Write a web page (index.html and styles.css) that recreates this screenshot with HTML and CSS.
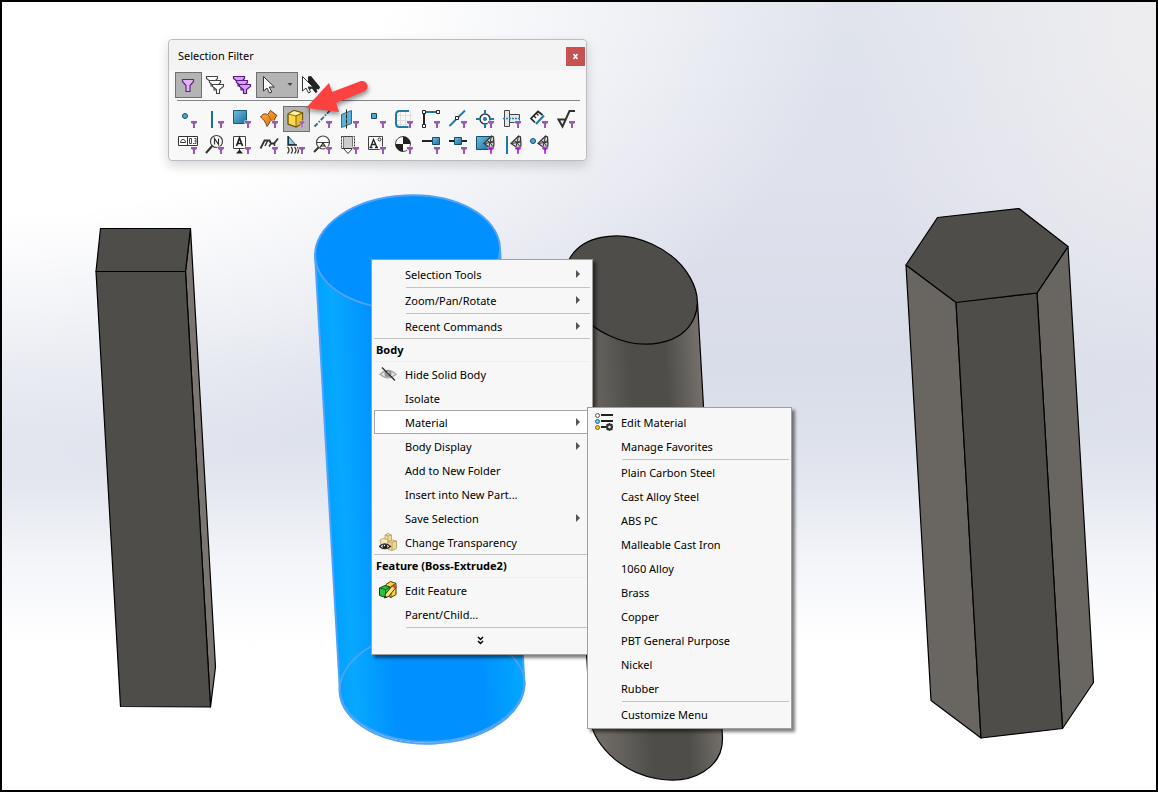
FILE: index.html
```html
<!DOCTYPE html>
<html lang="en">
<head>
    <meta charset="UTF-8">
    <meta name="viewport" content="width=device-width, initial-scale=1.0">
    <title>Part - Selection Filter</title>
    <link rel="stylesheet" href="styles.css">
</head>
<body>
    <!-- Shared icon parts -->
    <svg class="defs" aria-hidden="true">
        <defs>
            <linearGradient id="blueFill" x1="0" y1="0" x2="1" y2="1">
                <stop offset="0" stop-color="#6fc0e0"/>
                <stop offset="1" stop-color="#1b6f9c"/>
            </linearGradient>
            <linearGradient id="orangeFill" x1="0" y1="0" x2="1" y2="1">
                <stop offset="0" stop-color="#f9b052"/>
                <stop offset="1" stop-color="#d96a08"/>
            </linearGradient>
        </defs>
        <symbol id="funnel" viewBox="0 0 27 26">
            <path d="M15.500 14.500h7v3l-2 2v3.500h-3v-3.500l-2-2z" fill="#f8f8f8"/>
            <path d="M16 15h6v2l-2 1v4h-2v-4l-2-1z" fill="#9b59b6"/>
        </symbol>
        <symbol id="funnel-hot" viewBox="0 0 27 26">
            <path d="M16 15h6v2l-2 1v4h-2v-4l-2-1z" fill="#b010e0" stroke="#f8f8f8" stroke-width=".4"/>
        </symbol>
        <symbol id="mesh" viewBox="0 0 27 26">
            <path d="M12 11.500L19.500 4l2 1 .5 7-.5 3.500-4.500-.5z" fill="#d8d8d8" stroke="#333" stroke-width="1.200"/>
            <path d="M12 11.500l10-1.500M19.500 4L18 10.500l3.500 5M18 10.500l-1 4.500M15 8.500l3 2 4-2" fill="none" stroke="#333"/>
        </symbol>
        <symbol id="cursor" viewBox="0 0 27 26">
            <path d="M7.500 4.500v14.500l3.500-3 2.500 5 2.300-1-2.500-5h5z"/>
        </symbol>
    </svg>

    <main class="viewport">
        <!-- Solid bodies -->
        <svg class="model" viewBox="2 2 1154 788" role="img" aria-label="Four extruded bodies">
            <defs>
                <linearGradient id="blueBody" gradientUnits="userSpaceOnUse" x1="314" y1="254" x2="500" y2="243">
                    <stop offset="0" stop-color="#00a2ff"/>
                    <stop offset=".08" stop-color="#08a8ff"/>
                    <stop offset=".3" stop-color="#0090ff"/>
                    <stop offset=".75" stop-color="#0090ff"/>
                    <stop offset="1" stop-color="#00a8ff"/>
                </linearGradient>
                <linearGradient id="grayBody" gradientUnits="userSpaceOnUse" x1="565" y1="278" x2="697" y2="270">
                    <stop offset="0" stop-color="#74706b"/>
                    <stop offset=".2" stop-color="#65625e"/>
                    <stop offset=".45" stop-color="#4e4d4a"/>
                    <stop offset=".72" stop-color="#4e4d4a"/>
                    <stop offset="1" stop-color="#77726d"/>
                </linearGradient>
            </defs>
            <g class="edges">
                <path d="M190.500 228.500L215.500 667 210.500 707 185.500 271.500z" fill="#7a7571"/>
                <path d="M96 271.500h89.500L210.500 707l-90-.5z" fill="#4e4d4a"/>
                <path d="M100.500 228.500h90l-5 43H96z" fill="#4e4d4a"/>
            </g>
            <g class="edges-selected">
                <path d="M315 254L340 692A92.500 57 -3 0 0 524.500 684L500 249z" fill="url(#blueBody)"/>
                <ellipse cx="432" cy="687" rx="92.500" ry="56.500" transform="rotate(-3 432 687)" fill="none"/>
                <ellipse cx="407.500" cy="252" rx="92.500" ry="56.500" transform="rotate(-3 407.500 252)" fill="#0090ff"/>
            </g>
            <g class="edges">
                <path d="M565 278L590 714A69 50.500 24.400 0 0 722.500 738L697.500 302z" fill="url(#grayBody)"/>
                <ellipse cx="631" cy="290" rx="69" ry="50.500" transform="rotate(24.400 631 290)" fill="#4e4d4a"/>
            </g>
            <g class="edges">
                <path d="M906 265l50 37 25 436-50-37.500z" fill="#696561"/>
                <path d="M1037 293l31-46.500 25.500 436-31 46z" fill="#696561"/>
                <path d="M956 302l81-9 25.500 435.500-81.500 9.500z" fill="#4e4d4a"/>
                <path d="M937.500 217.500l81.500-9 49 38-31 46.500-81 9.500-50-37.500z" fill="#4e4d4a"/>
            </g>
        </svg>

        <!-- Selection Filter toolbar -->
        <section class="panel" aria-labelledby="panel-title">
            <header class="panel-header">
                <h1 id="panel-title">Selection Filter</h1>
                <button class="close-btn" aria-label="Close"><svg viewBox="0 0 19 19"><path d="M7.500 7l4 5M11.500 7l-4 5"/></svg></button>
            </header>
            <div class="tools">
                <button class="tool active" aria-label="Toggle filters"><svg viewBox="0 0 27 26"><path d="M7.500 7.500h11v2l-3.500 4v6h-4v-6l-3.500-4z" fill="#e3b5f5" stroke="#5b2a7a" stroke-width="1.200"/></svg></button>
                <button class="tool" aria-label="Clear all filters"><svg viewBox="0 0 27 26"><g fill="#fff" stroke="#444" stroke-width="1.100"><path d="M4.500 4.500h11v2l-3.500 3.500v4h-3v-4l-4.500-3.500z"/><path d="M7.500 8.500h11v2l-3.500 3.500v4h-3v-4l-4.500-3.500z"/><path d="M10.500 12.500h11v2l-4 3v4h-3v-4l-4-3z"/></g></svg></button>
                <button class="tool" aria-label="Select all filters"><svg viewBox="0 0 27 26"><g fill="#d9a0f0" stroke="#5b1a85" stroke-width="1.200"><path d="M4.500 4.500h11v2l-3.500 3.500v4h-3v-4l-4.500-3.500z"/><path d="M7.500 8.500h11v2l-3.500 3.500v4h-3v-4l-4.500-3.500z"/><path d="M10.500 12.500h11v2l-4 3v4h-3v-4l-4-3z"/></g></svg></button>
                <button class="tool tool-wide active" aria-label="Select"><svg viewBox="0 0 42 26"><use href="#cursor" width="27" height="26" fill="#fff" stroke="#333"/><path d="M31.500 11h5l-2.500 3z" fill="#444"/></svg></button>
                <button class="tool" aria-label="Invert selection"><svg viewBox="0 0 27 26"><path d="M10 4.500l3-.5 9 11-1 2.500-2.500-.5 1 3-2 1-3.500-4.500-4 2z" fill="#222"/><path d="M4.500 4.500v14.500l3.500-3 2.500 5 2-1-2.300-5H15z" fill="#fff" stroke="#333"/></svg></button>
            </div>
            <div class="tools">
                <button class="tool" aria-label="Filter vertices"><svg viewBox="0 0 27 26"><circle cx="10" cy="10" r="2.500" fill="#4fa6d0" stroke="#124f70"/><use href="#funnel"/></svg></button>
                <button class="tool" aria-label="Filter edges"><svg viewBox="0 0 27 26"><path d="M10 5v17" stroke="#1d6d96" stroke-width="2"/><use href="#funnel"/></svg></button>
                <button class="tool" aria-label="Filter faces"><svg viewBox="0 0 27 26"><path d="M4.500 4.500h13v13h-13z" fill="url(#blueFill)" stroke="#175a7d"/><use href="#funnel"/></svg></button>
                <button class="tool" aria-label="Filter surface bodies"><svg viewBox="0 0 27 26"><path d="M4.500 11c2-3.500 5-3.500 7-2.500 1.500-.5 1.500-3 3-4l6.500 5c-2 1.500-2 4-3 6-2-1-3-1.500-4 0-1 2-1.500 3.500-3 5-1-4-4-8-6.500-9.500z" fill="url(#orangeFill)" stroke="#7b3c04"/><path d="M11.500 8.500c1.500 1 3 4 3.500 6" fill="none" stroke="#b85a05"/><use href="#funnel"/></svg></button>
                <button class="tool active" aria-label="Filter solid bodies"><svg viewBox="0 0 27 26"><path d="M5 8l6-3.500 8.500 2.500v10l-6.500 4L5 18z" fill="#fbd84b" stroke="#6b5000" stroke-width="1.300"/><path d="M5 8l6-3.500 8.500 2.500-6.500 3z" fill="#fff1a0" stroke="#6b5000" stroke-width=".8"/><path d="M13 10l6.500-3v10l-6.500 4z" fill="#e8bd2c" stroke="#6b5000" stroke-width=".8"/><path d="M16 15h6v2l-2 1v4h-2v-4l-2-1z" fill="#9b59b6" stroke="#d9d0dd" stroke-width=".6"/></svg></button>
                <button class="tool" aria-label="Filter axes"><svg viewBox="0 0 27 26"><path d="M4.500 20.500l15.500-16" stroke="#1f6f98" stroke-width="1.800" stroke-dasharray="4.500 1.500 1.500 1.500"/><use href="#funnel"/></svg></button>
                <button class="tool" aria-label="Filter planes"><svg viewBox="0 0 27 26"><path d="M4.500 8.500l10-4v13l-10 4z" fill="#5cb0d4" stroke="#1f6f98"/><path d="M9.500 3.500v19" stroke="#222" stroke-dasharray="4 1"/><use href="#funnel"/></svg></button>
                <button class="tool" aria-label="Filter sketch points"><svg viewBox="0 0 27 26"><path d="M7.500 7.500h5v5h-5z" fill="#4fa6d0" stroke="#124f70"/><use href="#funnel"/></svg></button>
                <button class="tool" aria-label="Filter sketches"><svg viewBox="0 0 27 26"><path d="M9.500 5v17M14.500 5v17M19.500 5v17M5 9.500h17M5 14.500h17M5 18.500h17" stroke="#dedede"/><path d="M18 5H8.500Q5 5 5 9v8.500Q5 21 8.500 21H18" fill="none" stroke="#1f78a5" stroke-width="2"/><use href="#funnel"/></svg></button>
                <button class="tool" aria-label="Filter sketch segments"><svg viewBox="0 0 27 26"><path d="M6 6h14" stroke="#1f78a5" stroke-width="2"/><path d="M6 6v14" stroke="#222" stroke-width="2"/><path d="M4.500 4.500h3v3h-3zM18.500 4.500h3v3h-3zM4.500 18.500h3v3h-3z" fill="#fff" stroke="#222"/><use href="#funnel"/></svg></button>
                <button class="tool" aria-label="Filter midpoints"><svg viewBox="0 0 27 26"><path d="M4.500 20L20 4.500" stroke="#1f78a5" stroke-width="2"/><path d="M10.500 10.500h3v3h-3z" fill="#fff" stroke="#222"/><use href="#funnel"/></svg></button>
                <button class="tool" aria-label="Filter center marks"><svg viewBox="0 0 27 26"><circle cx="13" cy="13" r="5" fill="#fff" stroke="#333" stroke-width="1.500"/><path d="M4 13h5M17 13h5M13 4v5M13 17v5" stroke="#1f78a5" stroke-width="2"/><circle cx="13" cy="13" r="2" fill="#1f78a5"/><use href="#funnel"/></svg></button>
                <button class="tool" aria-label="Filter centerlines"><svg viewBox="0 0 27 26"><path d="M5.500 4.500h5v16h-5zM10.500 8.500h10v8h-10z" fill="#e6e6e6" stroke="#444"/><path d="M4 12.500h18" stroke="#1f86b8" stroke-width="1.500" stroke-dasharray="2 1"/><use href="#funnel"/></svg></button>
                <button class="tool" aria-label="Filter dimensions"><svg viewBox="0 0 27 26"><path d="M9 16.500l-4-4L12 5.500l4.500 3.500" fill="#fff" stroke="#222" stroke-width="1.700"/><path d="M7.500 9.500l2.500 2.500M10 7l2.500 2.500" stroke="#222" stroke-width="1.200"/><path d="M10 18l8-8.500" stroke="#1f78a5" stroke-width="2"/><use href="#funnel"/></svg></button>
                <button class="tool" aria-label="Filter surface finish symbols"><svg viewBox="0 0 27 26"><path d="M22 5h-5.500L9.500 20.500l-4-7H13" fill="none" stroke="#333" stroke-width="2"/><use href="#funnel"/></svg></button>

                <button class="tool" aria-label="Filter geometric tolerances"><svg viewBox="0 0 27 26"><path d="M3.500 4.500h19v9h-19zM12.500 4.500v9" fill="#fff" stroke="#333"/><path d="M5.500 10.500c0-4 5-4 5 0z" fill="none" stroke="#333"/><path d="M14.500 6.500h2v5h-2zM18 11.500h1M19.500 6.500H21v5h-1.500M19.500 9H21" fill="none" stroke="#333" stroke-width=".9"/><use href="#funnel"/></svg></button>
                <button class="tool" aria-label="Filter notes"><svg viewBox="0 0 27 26"><path d="M4 21l7-8" stroke="#333" stroke-width="2"/><circle cx="14.500" cy="9.500" r="6" fill="#fff" stroke="#444" stroke-width="1.200"/><path d="M12.500 12.500v-6l4 6v-6" fill="none" stroke="#333" stroke-width="1.200"/><use href="#funnel"/></svg></button>
                <button class="tool" aria-label="Filter datum features"><svg viewBox="0 0 27 26"><path d="M4.500 4.500h12v12h-12z" fill="#fff" stroke="#444"/><path d="M7.500 14l3-8 3 8M8.500 11.500h4" fill="none" stroke="#222" stroke-width="1.700"/><path d="M10.500 16.500v2" stroke="#222"/><path d="M7 21.500h7l-3.500-4z" fill="#222"/><use href="#funnel"/></svg></button>
                <button class="tool" aria-label="Filter weld symbols"><svg viewBox="0 0 27 26"><path d="M4.500 16.500L8.500 8.500h5l1.500 3h3l4-5" fill="none" stroke="#333" stroke-width="1.800"/><path d="M11.500 9l-2.500 5M15 11.500l-2 3M18.500 11v3" fill="none" stroke="#333" stroke-width="1.500"/><use href="#funnel"/></svg></button>
                <button class="tool" aria-label="Filter weld beads"><svg viewBox="0 0 27 26"><path d="M5.500 4.500v8h7z" fill="#8cc9e6" stroke="#175a7d"/><path d="M5 4v9h9" fill="none" stroke="#222" stroke-width="1.300"/><path d="M4.500 15q3 3 0 6.500M8 15q3 3 0 6.500M11.500 15q3 3 0 6.500M14.500 15q2 3 0 6.500" fill="none" stroke="#333" stroke-width="1.200"/><use href="#funnel"/></svg></button>
                <button class="tool" aria-label="Filter datum targets"><svg viewBox="0 0 27 26"><path d="M4 20l5-5" stroke="#333" stroke-width="2"/><circle cx="13" cy="10.500" r="6.500" fill="#fff" stroke="#444" stroke-width="1.200"/><path d="M6.500 10.500h13" stroke="#444"/><path d="M10 15.500l3-4.500 3 4.500M11 14h4" fill="none" stroke="#222" stroke-width="1.200"/><use href="#funnel"/></svg></button>
                <button class="tool" aria-label="Filter cosmetic threads"><svg viewBox="0 0 27 26"><path d="M6.500 4.500h9v12h-9z" fill="#ccc" stroke="#777"/><path d="M4.500 4.500h13v12h-13z" fill="none" stroke="#333" stroke-dasharray="2 1"/><path d="M6.500 16.500h9l-4.500 5z" fill="#fff" stroke="#333"/><use href="#funnel"/></svg></button>
                <button class="tool" aria-label="Filter blocks"><svg viewBox="0 0 27 26"><path d="M4.500 4.500h14v13h-14z" fill="#fff" stroke="#444"/><path d="M6.500 15.500l3-8 3.500 8M7.500 12.500h4M5.500 15.500h3M11 15.500h3" fill="none" stroke="#222" stroke-width="1.300"/><circle cx="15.500" cy="7.500" r="1.500" fill="none" stroke="#333"/><use href="#funnel"/></svg></button>
                <button class="tool" aria-label="Filter center of mass"><svg viewBox="0 0 27 26"><circle cx="12" cy="12" r="7.500" fill="#fff" stroke="#444"/><path d="M12 12V4.500A7.500 7.500 0 0 0 4.500 12zM12 12h7.500A7.500 7.500 0 0 1 12 19.500z" fill="#222" transform="rotate(90 12 12)"/><use href="#funnel"/></svg></button>
                <button class="tool" aria-label="Filter connection points"><svg viewBox="0 0 27 26"><path d="M4 9h11" stroke="#222" stroke-width="2"/><path d="M14.500 5.500h7v7h-7z" fill="url(#blueFill)" stroke="#124f70"/><use href="#funnel"/></svg></button>
                <button class="tool" aria-label="Filter routing points"><svg viewBox="0 0 27 26"><path d="M4 9h18" stroke="#222" stroke-width="2"/><path d="M9.500 5.500h7v7h-7z" fill="url(#blueFill)" stroke="#124f70"/><use href="#funnel"/></svg></button>
                <button class="tool" aria-label="Filter mesh facets"><svg viewBox="0 0 27 26"><path d="M4.500 4.500h14v13h-14z" fill="url(#blueFill)" stroke="#124f70"/><use href="#mesh"/><use href="#funnel-hot"/></svg></button>
                <button class="tool" aria-label="Filter mesh facet edges"><svg viewBox="0 0 27 26"><path d="M8 4v18" stroke="#1f78a5" stroke-width="2"/><use href="#mesh"/><use href="#funnel-hot"/></svg></button>
                <button class="tool" aria-label="Filter mesh facet vertices"><svg viewBox="0 0 27 26"><circle cx="7" cy="9" r="2.500" fill="#4fa6d0" stroke="#124f70"/><use href="#mesh"/><use href="#funnel-hot"/></svg></button>
            </div>
        </section>

        <svg class="pointer" viewBox="0 0 70 40" aria-hidden="true">
            <path d="M4 28L27 3l3 9 29-11a5.500 5.500 0 0 1 4 10L34 23l3 9z" fill="#fb4241"/>
        </svg>

        <!-- Context menu -->
        <div class="menu context-menu" role="menu" aria-label="Body">
            <button class="item" role="menuitem"><span class="icon"></span>Selection Tools<i class="arrow"></i></button>
            <hr>
            <button class="item" role="menuitem"><span class="icon"></span>Zoom/Pan/Rotate<i class="arrow"></i></button>
            <hr>
            <button class="item" role="menuitem"><span class="icon"></span>Recent Commands<i class="arrow"></i></button>
            <h2>Body</h2>
            <button class="item" role="menuitem"><svg class="icon" viewBox="0 0 18 18"><path d="M1 9.500Q9 1.500 17 9.500 9 16 1 9.500z" fill="#e5e5e5" stroke="#aaa" stroke-width="1.500"/><circle cx="9" cy="8.500" r="3.500" fill="#909090"/><circle cx="9" cy="8" r="1.500" fill="#ddd"/><path d="M3 2.500l13 13" stroke="#333" stroke-width="1.500"/></svg>Hide Solid Body</button>
            <button class="item" role="menuitem"><span class="icon"></span>Isolate</button>
            <button class="item selected" role="menuitem" aria-haspopup="true" aria-expanded="true"><span class="icon"></span>Material<i class="arrow"></i></button>
            <button class="item" role="menuitem"><span class="icon"></span>Body Display<i class="arrow"></i></button>
            <button class="item" role="menuitem"><span class="icon"></span>Add to New Folder</button>
            <button class="item" role="menuitem"><span class="icon"></span>Insert into New Part...</button>
            <button class="item" role="menuitem"><span class="icon"></span>Save Selection<i class="arrow"></i></button>
            <button class="item" role="menuitem"><svg class="icon" viewBox="0 0 18 18"><g stroke="#b79a58" stroke-width=".8"><path d="M6 2l3-1.500L12.500 2v6.500H6z" fill="#f3dfa6"/><path d="M1 7l3-1.500 5 1V15l-6 1z" fill="#f6e6b8"/><path d="M9 8.500l4-1.500 4.500 1v7.500L13 17.500l-4-1z" fill="#efd797"/><path d="M9 8.500l4 1v8M13 9.500l4.500-1.500M6 2l3 1v4M9 3l3.500-1" fill="none"/></g><path d="M.5 13.500q5-5.500 11 0-5.500 4.500-11 0z" fill="#fff" stroke="#222" stroke-width="1.200"/><circle cx="6" cy="13.300" r="2.400" fill="#222"/><circle cx="5.500" cy="12.500" r=".7" fill="#fff"/></svg>Change Transparency</button>
            <h2>Feature (Boss-Extrude2)</h2>
            <button class="item" role="menuitem"><svg class="icon" viewBox="0 0 18 18"><path d="M7 3.500L11.500.5l5.500 2v11L12 16.500 7 14z" fill="#f7d046" stroke="#4c3a00"/><path d="M12 5.500l5-3M12 5.500v11" stroke="#4c3a00" stroke-width=".8"/><path d="M.5 7L6 4.500 11 6v7.500L7 16.500l-6.500-2z" fill="#27c23b" stroke="#0c4a14"/><path d="M.5 7l6 1.500L11 6M6.500 8.500v7.500" fill="none" stroke="#0c4a14" stroke-width=".8"/><path d="M5.500 17l1-4 7.500-9 3 2.500-7.500 9z" fill="#ffe27a" stroke="#3b2b00" stroke-width=".9"/><path d="M13 5.200L14.500 3.500l3 2.500-1.500 1.700z" fill="#e23a2e"/><path d="M5.500 17l.6-2.500 1.800 1.500z" fill="#222"/></svg>Edit Feature</button>
            <button class="item" role="menuitem"><span class="icon"></span>Parent/Child...</button>
            <hr>
            <button class="item more" role="menuitem" aria-label="Show more"><svg viewBox="0 0 7 9"><path d="M1 1l2.500 2.500L6 1M1 5l2.500 2.500L6 5"/></svg></button>
        </div>

        <!-- Material submenu -->
        <div class="menu material-menu" role="menu" aria-label="Material">
            <button class="item" role="menuitem"><svg class="icon" viewBox="0 0 18 18"><path d="M6 2h12M6 8h12M6 14h5" stroke="#222" stroke-width="2"/><circle cx="2.500" cy="2.500" r="2" fill="#fff" stroke="#555"/><circle cx="2.500" cy="8.500" r="2" fill="#6ccaf0" stroke="#1d6d96"/><circle cx="2.500" cy="14.500" r="2" fill="#ffcc10" stroke="#7d6200"/><circle cx="14.500" cy="14" r="2.300" fill="#f7f7f7" stroke="#333" stroke-width="2"/><path d="M14.500 10v2M14.500 16v2M10.500 14h2M16.500 14h2M11.700 11.200l1.300 1.300M16 15.500l1.300 1.300M17.300 11.200L16 12.500M13 15.500l-1.300 1.300" stroke="#333" stroke-width="1.800"/></svg>Edit Material</button>
            <button class="item" role="menuitem"><span class="icon"></span>Manage Favorites</button>
            <hr>
            <button class="item" role="menuitem"><span class="icon"></span>Plain Carbon Steel</button>
            <button class="item" role="menuitem"><span class="icon"></span>Cast Alloy Steel</button>
            <button class="item" role="menuitem"><span class="icon"></span>ABS PC</button>
            <button class="item" role="menuitem"><span class="icon"></span>Malleable Cast Iron</button>
            <button class="item" role="menuitem"><span class="icon"></span>1060 Alloy</button>
            <button class="item" role="menuitem"><span class="icon"></span>Brass</button>
            <button class="item" role="menuitem"><span class="icon"></span>Copper</button>
            <button class="item" role="menuitem"><span class="icon"></span>PBT General Purpose</button>
            <button class="item" role="menuitem"><span class="icon"></span>Nickel</button>
            <button class="item" role="menuitem"><span class="icon"></span>Rubber</button>
            <hr>
            <button class="item" role="menuitem"><span class="icon"></span>Customize Menu</button>
        </div>
    </main>
</body>
</html>
```
FILE: styles.css
```css
* {
    margin: 0;
    padding: 0;
    box-sizing: border-box;
}

body {
    font-family: "Noto Sans", "Open Sans", sans-serif;
    font-size: 11px;
    color: #000;
}

button {
    font: inherit;
    color: inherit;
    background: none;
    border: none;
}

.defs {
    position: absolute;
    width: 0;
    height: 0;
}

.viewport {
    position: relative;
    min-height: 100vh;
    border: 2px solid #000;
    overflow: hidden;
    background:
        radial-gradient(ellipse 73% 60% at 0 0, #fff 45%, rgba(255, 255, 255, 0.5) 74%, rgba(255, 255, 255, 0) 100%),
        radial-gradient(ellipse 26% 52% at 100% 4%, #ededf0 10%, rgba(237, 239, 244, 0) 100%),
        linear-gradient(to bottom, #e0e4ec 0, #dfe1ec 22%, #d9ddE9 46%, #dde1eb 55%, #e5e8f0 62%, #f5f6fa 72%, #fff 82%);
}

.model {
    position: absolute;
    top: 0;
    left: 0;
    width: 100%;
    height: 100%;
}

.edges {
    stroke: #000;
    stroke-width: 1.2;
    stroke-linejoin: round;
}

.edges-selected {
    stroke: #4ea2fa;
    stroke-width: 2;
}

/* Selection Filter */
.panel {
    position: absolute;
    top: 37px;
    left: 166px;
    width: 419px;
    padding-bottom: 2px;
    background: #f8f8f8;
    border: 1px solid #b9bcc2;
    border-radius: 4px;
    box-shadow: 0 5px 12px rgba(0, 0, 0, 0.16);
}

.panel-header {
    display: flex;
    justify-content: space-between;
    align-items: center;
    height: 30px;
    padding: 2px 1px 0 9px;
    background: #f3f3f3;
    border-radius: 4px 4px 0 0;
}

.panel-header h1 {
    padding-bottom: 2px;
    font-size: 11px;
    font-weight: normal;
}

.close-btn {
    width: 19px;
    height: 19px;
    background: #c75050;
}

.close-btn svg {
    display: block;
    stroke: #fff;
    stroke-width: 1.7;
}

.tools {
    display: flex;
    flex-wrap: wrap;
    padding: 2px 6px;
}

.tools + .tools {
    position: relative;
    padding: 6px 5px 0 6px;
}

.tools + .tools::before {
    content: "";
    position: absolute;
    top: 0;
    left: 8px;
    right: 6px;
    border-top: 1px solid #858585;
}

.tool {
    width: 27px;
    height: 26px;
}

.tool-wide {
    width: 42px;
}

.tool svg {
    display: block;
    width: 100%;
    height: 100%;
}

.tool.active {
    background: #b4b4b4;
    box-shadow: inset 0 0 0 1px #707070;
}

.pointer {
    position: absolute;
    top: 78px;
    left: 300px;
    width: 70px;
    height: 40px;
    overflow: visible;
    filter: drop-shadow(1px 3px 2px rgba(0, 0, 0, 0.4));
}

/* Menus */
.menu {
    position: absolute;
    padding: 2px;
    background: #f7f7f7;
    border: 1px solid #a0a0a0;
    box-shadow: 3px 3px 3px rgba(0, 0, 0, 0.5);
}

.context-menu {
    top: 257px;
    left: 369px;
    width: 222px;
}

.material-menu {
    top: 405px;
    left: 585px;
    width: 205px;
}

.item {
    display: flex;
    align-items: center;
    width: 100%;
    height: 24px;
    padding: 0 9px 0 4px;
    border: 1px solid transparent;
    text-align: left;
    white-space: nowrap;
}

.item.selected {
    background: #fff;
    border-color: #a6a6a6;
}

.icon {
    width: 18px;
    height: 18px;
    margin-right: 8px;
}

.arrow {
    margin-left: auto;
    border: 4px solid transparent;
    border-left-color: #555;
    border-right-width: 0;
}

.menu hr {
    height: 2px;
    margin-left: 32px;
    border: none;
    border-bottom: 1px solid #c3c3c3;
}

.menu h2 {
    height: 24px;
    padding-left: 2px;
    line-height: 22px;
    font-size: 11px;
    border-top: 1px solid #c3c3c3;
    border-bottom: 1px solid #efefef;
}

.more {
    justify-content: center;
    padding: 0 7px 0 4px;
}

.more svg {
    width: 7px;
    height: 9px;
    fill: none;
    stroke: #000;
    stroke-width: 1.5;
}
```
